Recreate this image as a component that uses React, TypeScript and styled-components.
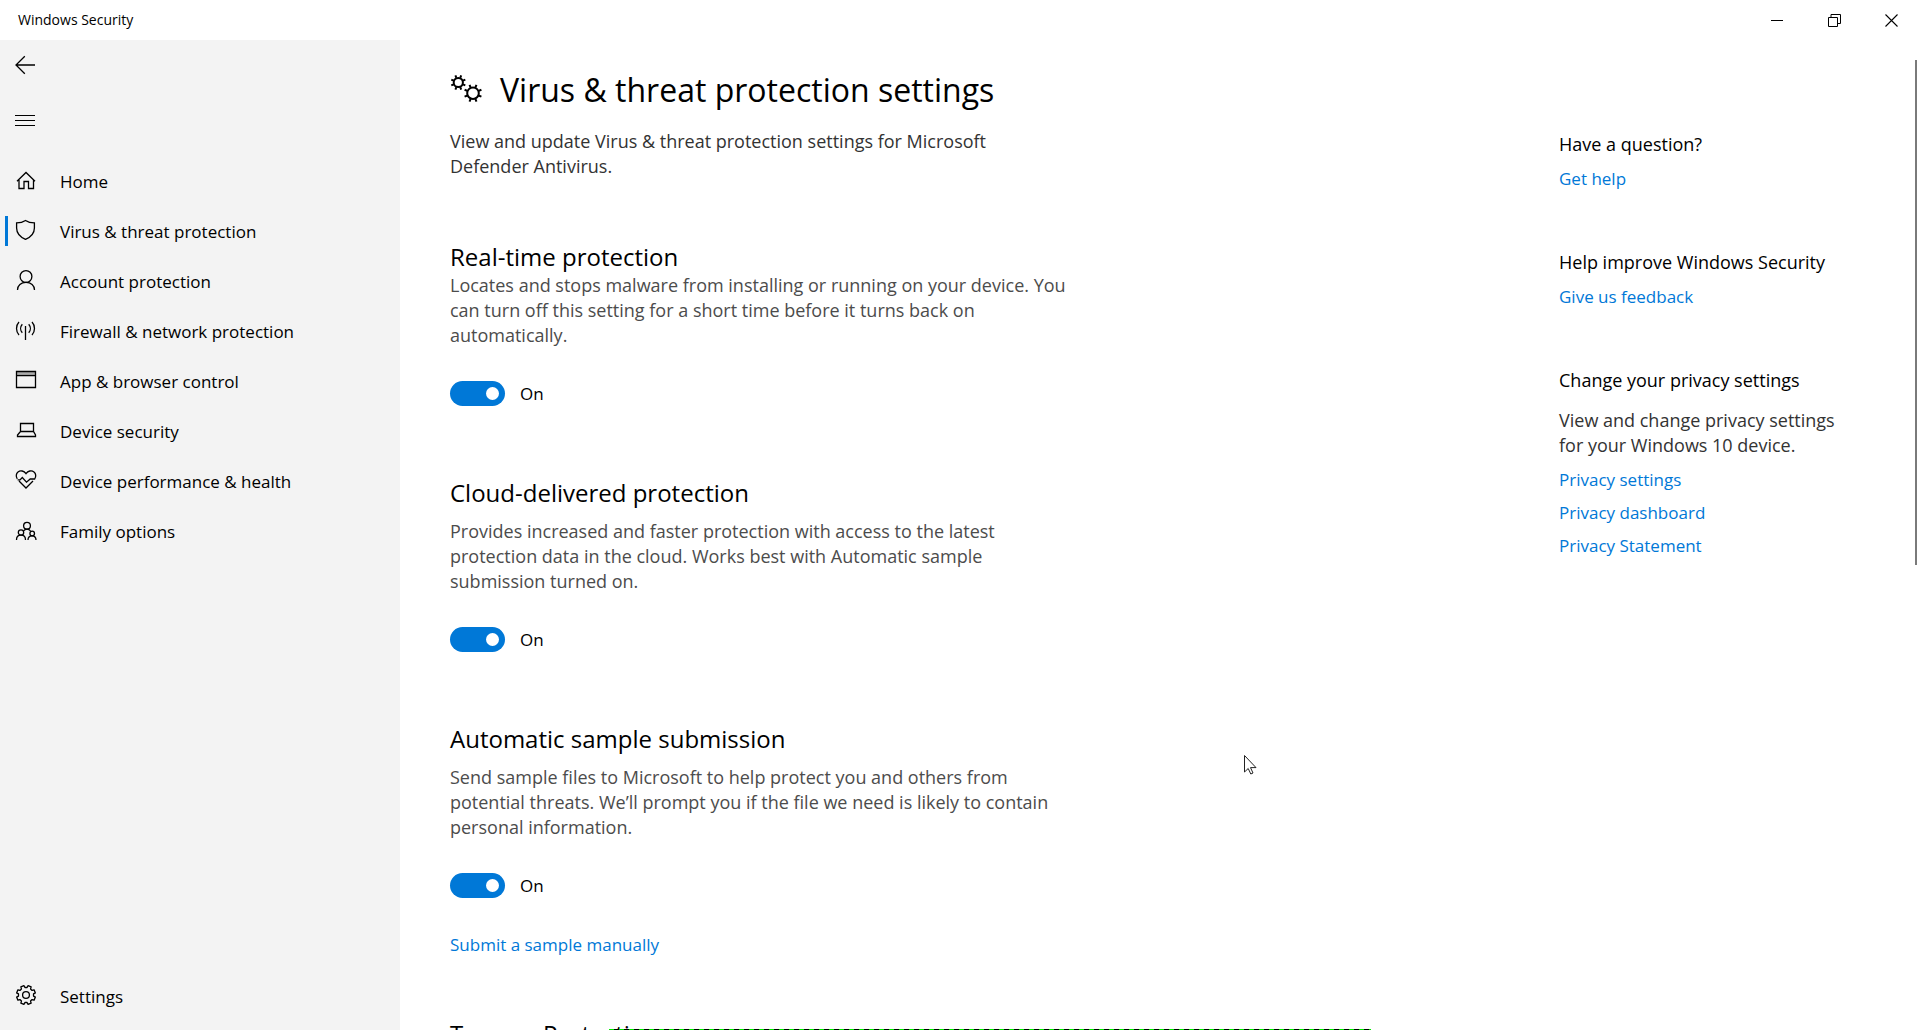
import React from "react";
import styled, { createGlobalStyle } from "styled-components";

const GlobalStyle = createGlobalStyle`
  *, *::before, *::after { box-sizing: border-box; }
  html, body, #root { height: 100%; }
  body {
    margin: 0;
    overflow: hidden;
    background: #fff;
    color: #000;
    font-family: "Open Sans", "Noto Sans", sans-serif;
    font-size: 17px;
    line-height: 25px;
  }
  h1, h2, h3, p { margin: 0; font-weight: 400; }
  button { margin: 0; padding: 0; border: 0; background: none; color: inherit; font: inherit; }
`;

const Window = styled.div`
  display: flex;
  flex-direction: column;
  height: 100vh;
`;

const TitleBar = styled.header`
  display: flex;
  align-items: stretch;
  justify-content: space-between;
  flex: 0 0 40px;
`;

const WindowTitle = styled.span`
  padding-left: 18px;
  font-size: 14px;
  line-height: 40px;
`;

const WindowControls = styled.div`
  display: flex;
`;

const WindowButton = styled.button`
  display: grid;
  place-items: center;
  width: 57px;
`;

const Body = styled.div`
  display: flex;
  flex: 1;
  min-height: 0;
`;

const Sidebar = styled.nav`
  display: flex;
  flex-direction: column;
  flex: 0 0 400px;
  padding-bottom: 9px;
  background: #f3f3f3;
`;

const BarButton = styled.button`
  display: flex;
  align-items: center;
  width: 50px;
  height: 50px;
  padding-left: 15px;
`;

const TopButtons = styled.div`
  display: flex;
  flex-direction: column;
  gap: 5px;
  margin-bottom: 11px;
`;

const NavList = styled.ul`
  flex: 1;
  margin: 0;
  padding: 0;
  list-style: none;
`;

const NavLink = styled.a<{ $active?: boolean }>`
  display: flex;
  align-items: center;
  height: 50px;
  color: #000;
  text-decoration: none;

  &::before {
    content: "";
    width: 3px;
    height: 30px;
    margin: 0 6px 0 5px;
    background: ${(p) => (p.$active ? "#0078d7" : "transparent")};
  }

  svg { margin-right: 22px; }
`;

const Scroller = styled.div`
  position: relative;
  display: flex;
  flex: 1;
  justify-content: space-between;
  align-items: flex-start;
  min-width: 0;
  padding: 28px 0 0 50px;
  overflow: hidden;
`;

const ScrollThumb = styled.div`
  position: absolute;
  top: 20px;
  right: 3px;
  width: 2px;
  height: 51%;
  background: #7a7a7a;
`;

const Content = styled.main`
  flex: 0 1 622px;
`;

const PageTitle = styled.h1`
  display: flex;
  align-items: center;
  gap: 14px;
  font-size: 32px;
  line-height: 44px;
  white-space: nowrap;
`;

const Intro = styled.p`
  max-width: 560px;
  margin-top: 17px;
  font-size: 18px;
  color: #333;
`;

const Section = styled.section<{ $first?: boolean; $afterLink?: boolean }>`
  margin-top: ${(p) => (p.$first ? 63 : p.$afterLink ? 62 : 72)}px;
`;

const SectionTitle = styled.h2<{ $tight?: boolean }>`
  margin-bottom: ${(p) => (p.$tight ? 1 : 11)}px;
  font-size: 24px;
  line-height: 30px;
`;

const Description = styled.p`
  font-size: 18px;
  color: #4c4c4c;
`;

const SwitchLabel = styled.label`
  display: flex;
  align-items: center;
  gap: 15px;
  width: max-content;
  margin-top: 33px;
`;

const Switch = styled.input`
  display: flex;
  align-items: center;
  appearance: none;
  width: 55px;
  height: 25px;
  margin: 0;
  padding: 0 6px;
  border-radius: 13px;
  background: #767676;

  &::before {
    content: "";
    width: 13px;
    height: 13px;
    border-radius: 50%;
    background: #fff;
  }

  &:checked { background: #0078d7; }
  &:checked::before { margin-left: auto; }
`;

const Link = styled.a`
  display: block;
  width: max-content;
  color: #0078d7;
  text-decoration: none;
`;

const SectionLink = styled(Link)`
  margin-top: 34px;
`;

const Aside = styled.aside`
  display: flex;
  flex-direction: column;
  flex: 0 0 361px;
  gap: 59px;
  padding: 64px 70px 0 0;
`;

const HelpGroup = styled.section`
  display: flex;
  flex-direction: column;
  gap: 9px;
`;

const HelpLinks = styled.div`
  display: flex;
  flex-direction: column;
  gap: 8px;
`;

const HelpTitle = styled.h3`
  font-size: 18px;
`;

const HelpText = styled.p`
  margin-top: 6px;
  font-size: 18px;
  color: #333;
`;

const CaptureEdge = styled.div`
  position: absolute;
  bottom: 0;
  left: 609px;
  width: 762px;
  height: 1px;
  background: repeating-linear-gradient(90deg, #00e800 0 5px, #000 5px 10px);
`;

const Pointer = styled.svg`
  position: absolute;
  top: 755px;
  left: 1244px;
`;

function Glyph({ children, size = 24, width = 1.3 }: { children: React.ReactNode; size?: number; width?: number }) {
  return (
    <svg width={size} height={size} viewBox={`0 0 ${size} ${size}`} fill="none" stroke="#000" strokeWidth={width} aria-hidden="true">
      {children}
    </svg>
  );
}

function cogPath(cx: number, cy: number, inner: number, outer: number, teeth: number, turn = 0) {
  const points: string[] = [];
  for (let i = 0; i < teeth; i++) {
    const mid = ((i + turn) / teeth) * Math.PI * 2;
    const step = (Math.PI * 2) / teeth;
    [[-0.32, inner], [-0.22, outer], [0.22, outer], [0.32, inner]].forEach(([k, r]) => {
      const a = mid + k * step;
      points.push(`${(cx + Math.cos(a) * r).toFixed(2)} ${(cy + Math.sin(a) * r).toFixed(2)}`);
    });
  }
  return `M${points.join("L")}Z`;
}

function spokes(cx: number, cy: number, inner: number, outer: number, turn: number) {
  let d = "";
  for (let i = 0; i < 8; i++) {
    const a = ((i + turn) / 8) * Math.PI * 2;
    d += `M${(cx + Math.cos(a) * inner).toFixed(2)} ${(cy + Math.sin(a) * inner).toFixed(2)}L${(cx + Math.cos(a) * outer).toFixed(2)} ${(cy + Math.sin(a) * outer).toFixed(2)}`;
  }
  return d;
}

const navItems = [
  { label: "Home", icon: <path d="M3 12.3 12 3.5l9 8.8M5 11v8.5h5v-7h4.500v7h5V11" /> },
  {
    label: "Virus & threat protection",
    active: true,
    icon: <path d="M11.500 1.500C9 3.200 6 3.900 2.600 3.900V9c0 5.500 3.500 9 8.900 11.400C17 18 20.400 14.500 20.400 9V3.900C17 3.900 14 3.200 11.500 1.500Z" />,
  },
  {
    label: "Account protection",
    icon: <><circle cx="12" cy="7.500" r="5.900" /><path d="M3.500 21c0-4.500 3.500-7.600 8.500-7.600s8.500 3.100 8.500 7.600" /></>,
  },
  {
    label: "Firewall & network protection",
    icon: <path d="M11.500 7v14M5 3C1.700 6.500 1.700 12.500 5 16M18 3c3.300 3.500 3.300 9.500 0 13M8.300 5.200c-2.200 2.500-2.200 6.100 0 8.600M14.700 5.200c2.200 2.500 2.200 6.100 0 8.600" />,
  },
  {
    label: "App & browser control",
    icon: <><path d="M2.500 4h19" stroke="#aaa" strokeWidth="3" /><path d="M2.500 2.500h19v16h-19zM2.500 6.500h19" /></>,
  },
  {
    label: "Device security",
    icon: <path d="M6.500 13V4.500h13V13M6.500 12.500h13l2 3.500v1.500h-18V16z" />,
  },
  {
    label: "Device performance & health",
    icon: <path d="M3.300 9.900C1.700 7.700 2 4.500 4 2.900c2.600-2 6-1 8 1.800 2-2.800 5.400-3.800 8-1.800 2 1.600 2.300 4.800.7 7.100h-4.500l-3.700 3.200-4.200-4.700L6 10.900H3.600M5 12l7 7 7-7" />,
  },
  {
    label: "Family options",
    icon: <><circle cx="13" cy="6.700" r="3.400" /><circle cx="7" cy="13.500" r="2.700" /><circle cx="18.200" cy="14.500" r="2.300" /><path d="M2.500 21c0-3 1.800-4.800 4.500-4.800s4.500 1.800 4.500 4.800M14 21c0-2.600 1.500-4.200 4-4.200s4 1.600 4 4.200M9.500 12c.8-1.200 2-1.900 3.500-1.900s2.700.7 3.500 1.900" /></>,
  },
];

const sections = [
  {
    title: "Real-time protection",
    text: "Locates and stops malware from installing or running on your device. You can turn off this setting for a short time before it turns back on automatically.",
  },
  {
    title: "Cloud-delivered protection",
    text: "Provides increased and faster protection with access to the latest protection data in the cloud. Works best with Automatic sample submission turned on.",
  },
  {
    title: "Automatic sample submission",
    text: "Send sample files to Microsoft to help protect you and others from potential threats. We’ll prompt you if the file we need is likely to contain personal information.",
    link: "Submit a sample manually",
  },
];

export default function App() {
  return (
    <Window>
      <GlobalStyle />
      <TitleBar>
        <WindowTitle>Windows Security</WindowTitle>
        <WindowControls>
          <WindowButton aria-label="Minimize">
            <Glyph size={13} width={1}><path d="M0 6.500h12" /></Glyph>
          </WindowButton>
          <WindowButton aria-label="Restore">
            <Glyph size={13} width={1}><path d="M.5 3.500h9v9h-9zM3 3V.5h9.500v9H10" /></Glyph>
          </WindowButton>
          <WindowButton aria-label="Close">
            <Glyph size={13} width={1.1}><path d="m.5.5 12 12m0-12-12 12" /></Glyph>
          </WindowButton>
        </WindowControls>
      </TitleBar>

      <Body>
        <Sidebar aria-label="Main">
          <TopButtons>
            <BarButton aria-label="Back">
              <Glyph size={20}><path d="M20 10H1.500M9.800 1.200 1 10l8.800 8.800" /></Glyph>
            </BarButton>
            <BarButton aria-label="Open navigation">
              <Glyph size={20} width={1}><path d="M0 5.500h20M0 10.500h20M0 15.500h20" /></Glyph>
            </BarButton>
          </TopButtons>
          <NavList>
            {navItems.map((item) => (
              <li key={item.label}>
                <NavLink href="#" $active={item.active}>
                  <Glyph>{item.icon}</Glyph>
                  {item.label}
                </NavLink>
              </li>
            ))}
          </NavList>
          <NavLink href="#">
            <Glyph><path d={cogPath(12, 11, 7.6, 9.6, 8, 0.5)} strokeLinejoin="round" /><circle cx="12" cy="11" r="3.400" /></Glyph>
            Settings
          </NavLink>
        </Sidebar>

        <Scroller>
          <Content>
            <PageTitle>
              <Glyph size={36} width={2}>
                <circle cx="8.300" cy="10.500" r="4.600" />
                <path d={spokes(8.3, 10.5, 5, 7.6, 0.5)} />
                <circle cx="23" cy="21.200" r="5.800" />
                <path d={spokes(23, 21.2, 6, 9.1, 0.5)} />
              </Glyph>
              Virus &amp; threat protection settings
            </PageTitle>
            <Intro>View and update Virus &amp; threat protection settings for Microsoft Defender Antivirus.</Intro>

            {sections.map((s, i) => (
              <Section key={s.title} $first={i === 0}>
                <SectionTitle $tight={i === 0}>{s.title}</SectionTitle>
                <Description>{s.text}</Description>
                <SwitchLabel>
                  <Switch type="checkbox" role="switch" defaultChecked />
                  On
                </SwitchLabel>
                {s.link && <SectionLink href="#">{s.link}</SectionLink>}
              </Section>
            ))}
            <Section $afterLink>
              <SectionTitle>Tamper Protection</SectionTitle>
            </Section>
          </Content>

          <Aside>
            <HelpGroup>
              <HelpTitle>Have a question?</HelpTitle>
              <Link href="#">Get help</Link>
            </HelpGroup>
            <HelpGroup>
              <HelpTitle>Help improve Windows Security</HelpTitle>
              <Link href="#">Give us feedback</Link>
            </HelpGroup>
            <HelpGroup>
              <HelpTitle>Change your privacy settings</HelpTitle>
              <HelpText>View and change privacy settings for your Windows 10 device.</HelpText>
              <HelpLinks>
                <Link href="#">Privacy settings</Link>
                <Link href="#">Privacy dashboard</Link>
                <Link href="#">Privacy Statement</Link>
              </HelpLinks>
            </HelpGroup>
          </Aside>
          <ScrollThumb />
        </Scroller>
      </Body>

      <CaptureEdge />
      <Pointer width="13" height="20" viewBox="0 0 13 20" fill="#fff" stroke="#222" aria-hidden="true">
        <path d="M.5.500v16.500l3.700-3.500 2.600 5.500 2.200-1-2.500-5.400H12z" />
      </Pointer>
    </Window>
  );
}
